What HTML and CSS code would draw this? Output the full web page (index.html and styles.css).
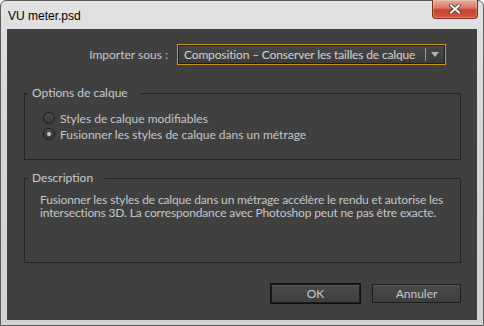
FILE: index.html
```html
<!DOCTYPE html>
<html lang="fr">
<head>
    <meta charset="UTF-8">
    <title>VU meter.psd</title>
    <link rel="stylesheet" href="styles.css">
</head>
<body>
<div class="window">
    <div class="titlebar">
        <span class="title">VU meter.psd</span>
        <button class="close-btn" aria-label="Fermer">
            <svg width="12" height="10" viewBox="0 0 12 10">
                <path d="M2 1.5 L10 8.5 M10 1.5 L2 8.5" stroke="#3a3a3a" stroke-width="3.6" stroke-linecap="square"/>
                <path d="M2 1.5 L10 8.5 M10 1.5 L2 8.5" stroke="#ffffff" stroke-width="2" stroke-linecap="square"/>
            </svg>
        </button>
    </div>

    <div class="panel">
        <div class="import-row">
            <label class="import-label" for="importAs">Importer sous :</label>
            <div class="select" id="importAs">
                <span class="select-value">Composition – Conserver les tailles de calque</span>
                <span class="select-arrow">
                    <svg width="8" height="5" viewBox="0 0 8 5"><path d="M0 0 H8 L4 5 Z" fill="#b4b4b4"/></svg>
                </span>
            </div>
        </div>

        <fieldset class="group group-options">
            <legend>Options de calque</legend>
            <label class="radio"><span class="radio-dot"></span>Styles de calque modifiables</label>
            <label class="radio checked"><span class="radio-dot"></span>Fusionner les styles de calque dans un métrage</label>
        </fieldset>

        <fieldset class="group group-desc">
            <legend>Description</legend>
            <p class="desc-text">Fusionner les styles de calque dans un métrage accélère le rendu et autorise les intersections 3D. La correspondance avec Photoshop peut ne pas être exacte.</p>
        </fieldset>

        <div class="actions">
            <button class="btn btn-default">OK</button>
            <button class="btn">Annuler</button>
        </div>
    </div>
</div>
</body>
</html>
```

FILE: styles.css
```css
body {
    margin: 0;
    padding: 0;
    background-color: #ffffff;
    font-family: Lato, 'Liberation Sans', sans-serif;
    font-size: 12px;
}

.window {
    width: 484px;
    height: 326px;
    box-sizing: border-box;
    border: 1px solid #5c5c5c;
    border-radius: 6px 6px 0 0;
    background: linear-gradient(180deg, #e2e2e2 0%, #d6d6d6 40%, #d2d2d2 100%);
    display: flex;
    flex-direction: column;
}

.titlebar {
    height: 28px;
    display: flex;
    justify-content: space-between;
    align-items: flex-start;
    padding-left: 7px;
    padding-right: 5px;
}

.title {
    margin-top: 7px;
    line-height: 16px;
    color: #000;
    font-family: 'Liberation Sans', Arial, sans-serif;
}

.close-btn {
    width: 46px;
    height: 19px;
    margin-top: -1px;
    padding: 0;
    border: 1px solid #7b2d22;
    border-top: none;
    border-radius: 0 0 4px 4px;
    background: linear-gradient(180deg, #e8ab9d 0%, #db7766 45%, #c6412c 55%, #d3583f 100%);
    display: flex;
    align-items: center;
    justify-content: center;
    box-shadow: inset 0 0 0 1px rgba(255, 255, 255, 0.25);
}

.panel {
    flex: 1;
    margin: 0 6px 5px 6px;
    background-color: #404040;
    color: #c6c8cc;
    display: flex;
    flex-direction: column;
}

.import-row {
    display: flex;
    justify-content: flex-end;
    align-items: center;
    margin-top: 15px;
    padding-right: 31px;
}

.import-label {
    margin-right: 9px;
    color: #c8cacd;
}

.select {
    width: 269px;
    height: 21px;
    box-sizing: border-box;
    border: 1px solid #cf960f;
    box-shadow: inset 0 0 0 1px #1e1e1e;
    background: linear-gradient(180deg, #474747 0%, #3b3b3b 100%);
    display: flex;
    align-items: center;
    color: #d2d4d8;
}

.select-value {
    flex: 1;
    padding-left: 6px;
    white-space: nowrap;
    overflow: hidden;
    letter-spacing: -0.15px;
}

.select-arrow {
    width: 18px;
    height: 13px;
    border-left: 1px solid #9a9a9a;
    display: flex;
    align-items: center;
    justify-content: center;
    margin-right: 1px;
}

.group {
    margin: 0 16px 0 17px;
    padding: 0 0 0 3px;
    border: 1px solid #242424;
    min-width: 0;
}

.group legend {
    padding: 0 12px 0 4px;
    line-height: 14px;
    color: #c8cacd;
}

.group-options {
    margin-top: 21px;
    padding-top: 10px;
    padding-bottom: 17px;
}

.radio {
    display: flex;
    align-items: center;
    height: 16px;
    padding-left: 15px;
}

.radio-dot {
    width: 10px;
    height: 10px;
    border: 1px solid #1c1c1c;
    border-radius: 50%;
    background: linear-gradient(180deg, #4c4c4c 0%, #3a3a3a 100%);
    margin-right: 5px;
    position: relative;
}

.radio.checked .radio-dot::after {
    content: "";
    position: absolute;
    left: 3px;
    top: 3px;
    width: 4px;
    height: 4px;
    border-radius: 50%;
    background-color: #c8c8c8;
}

.group-desc {
    margin-top: 11px;
    padding-top: 8px;
    padding-bottom: 43px;
}

.desc-text {
    margin: 0;
    padding: 0 4px 0 12px;
    line-height: 13px;
    letter-spacing: -0.15px;
}

.actions {
    display: flex;
    justify-content: flex-end;
    gap: 12px;
    margin-top: 21px;
    padding-right: 16px;
}

.btn {
    width: 89px;
    height: 19px;
    padding: 0;
    border: 1px solid #1c1c1c;
    background: linear-gradient(180deg, #4a4a4a 0%, #3f3f3f 100%);
    box-shadow: inset 0 1px 0 #555;
    color: #c6c8cc;
    font-family: Lato, 'Liberation Sans', sans-serif;
    font-size: 12px;
}

.btn-default {
    outline: 1px solid #111;
}
```
